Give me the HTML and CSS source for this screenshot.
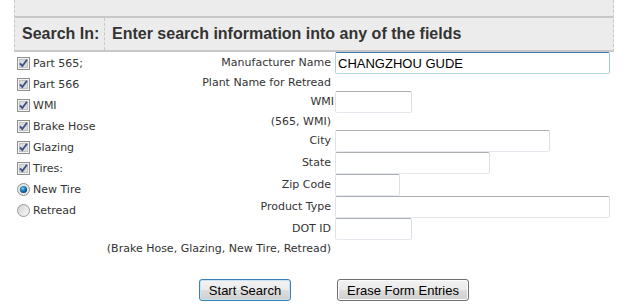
FILE: index.html
```html
<!DOCTYPE html>
<html lang="en">

<head>
    <meta charset="UTF-8">
    <title>Search</title>
    <link rel="stylesheet" href="styles.css">
</head>

<body>
    <div id="box">
        <div class="band"></div>
        <div class="head">
            <div class="head-left">Search In:</div>
            <div class="head-right">Enter search information into any of the fields</div>
        </div>
    </div>

    <form class="main">
        <div class="checks">
            <label class="opt"><svg class="cb" width="13" height="13" viewBox="0 0 13 13"><rect x="0.5" y="0.5" width="12" height="12" fill="#f4f4f4" stroke="#8e8f8f"/><rect x="2.5" y="2.5" width="8" height="8" fill="#dcdcdc" stroke="#c2c2c2"/><path d="M3 6.3 L5.3 9 L10 2.8" fill="none" stroke="#3b5289" stroke-width="1.9"/></svg>Part 565;</label>
            <label class="opt"><svg class="cb" width="13" height="13" viewBox="0 0 13 13"><rect x="0.5" y="0.5" width="12" height="12" fill="#f4f4f4" stroke="#8e8f8f"/><rect x="2.5" y="2.5" width="8" height="8" fill="#dcdcdc" stroke="#c2c2c2"/><path d="M3 6.3 L5.3 9 L10 2.8" fill="none" stroke="#3b5289" stroke-width="1.9"/></svg>Part 566</label>
            <label class="opt"><svg class="cb" width="13" height="13" viewBox="0 0 13 13"><rect x="0.5" y="0.5" width="12" height="12" fill="#f4f4f4" stroke="#8e8f8f"/><rect x="2.5" y="2.5" width="8" height="8" fill="#dcdcdc" stroke="#c2c2c2"/><path d="M3 6.3 L5.3 9 L10 2.8" fill="none" stroke="#3b5289" stroke-width="1.9"/></svg>WMI</label>
            <label class="opt"><svg class="cb" width="13" height="13" viewBox="0 0 13 13"><rect x="0.5" y="0.5" width="12" height="12" fill="#f4f4f4" stroke="#8e8f8f"/><rect x="2.5" y="2.5" width="8" height="8" fill="#dcdcdc" stroke="#c2c2c2"/><path d="M3 6.3 L5.3 9 L10 2.8" fill="none" stroke="#3b5289" stroke-width="1.9"/></svg>Brake Hose</label>
            <label class="opt"><svg class="cb" width="13" height="13" viewBox="0 0 13 13"><rect x="0.5" y="0.5" width="12" height="12" fill="#f4f4f4" stroke="#8e8f8f"/><rect x="2.5" y="2.5" width="8" height="8" fill="#dcdcdc" stroke="#c2c2c2"/><path d="M3 6.3 L5.3 9 L10 2.8" fill="none" stroke="#3b5289" stroke-width="1.9"/></svg>Glazing</label>
            <label class="opt"><svg class="cb" width="13" height="13" viewBox="0 0 13 13"><rect x="0.5" y="0.5" width="12" height="12" fill="#f4f4f4" stroke="#8e8f8f"/><rect x="2.5" y="2.5" width="8" height="8" fill="#dcdcdc" stroke="#c2c2c2"/><path d="M3 6.3 L5.3 9 L10 2.8" fill="none" stroke="#3b5289" stroke-width="1.9"/></svg>Tires:</label>
            <label class="opt"><svg class="cb" width="13" height="13" viewBox="0 0 13 13"><defs><radialGradient id="dot" cx="0.4" cy="0.35" r="0.7"><stop offset="0" stop-color="#7fd0f5"/><stop offset="0.5" stop-color="#1a78b8"/><stop offset="1" stop-color="#0b3f6e"/></radialGradient></defs><circle cx="6.5" cy="6.5" r="6" fill="#e8e8e8" stroke="#8e8f8f"/><circle cx="6.5" cy="6.5" r="3.6" fill="url(#dot)"/></svg>New Tire</label>
            <label class="opt"><svg class="cb" width="13" height="13" viewBox="0 0 13 13"><defs><linearGradient id="rd" x1="0" y1="0" x2="1" y2="1"><stop offset="0" stop-color="#d2d2d2"/><stop offset="1" stop-color="#fafafa"/></linearGradient></defs><circle cx="6.5" cy="6.5" r="6" fill="url(#rd)" stroke="#9a9a9a"/></svg>Retread</label>
        </div>

        <div class="fields">
            <span class="lbl tall">Manufacturer Name</span>
            <input class="txt w-full focus" type="text" value="CHANGZHOU GUDE">

            <span class="lbl">Plant Name for Retread</span>
            <span></span>

            <span class="lbl tall wmi">WMI</span>
            <input class="txt w-short" type="text">

            <span class="lbl">(565, WMI)</span>
            <span></span>

            <span class="lbl tall">City</span>
            <input class="txt w-city" type="text">

            <span class="lbl tall">State</span>
            <input class="txt w-state" type="text">

            <span class="lbl tall">Zip Code</span>
            <input class="txt w-zip" type="text">

            <span class="lbl tall">Product Type</span>
            <input class="txt w-full" type="text">

            <span class="lbl tall">DOT ID</span>
            <input class="txt w-short" type="text">

            <span class="lbl">(Brake Hose, Glazing, New Tire, Retread)</span>
            <span></span>
        </div>
    </form>

    <div class="buttons">
        <button class="btn default" type="button">Start Search</button>
        <button class="btn" type="button">Erase Form Entries</button>
    </div>
</body>

</html>
```

FILE: styles.css
```css
* {
    margin: 0;
    padding: 0;
    box-sizing: border-box;
}

body {
    background-color: #fff;
    font-family: 'DejaVu Sans', sans-serif;
    font-size: 11px;
    color: #333;
}

#box {
    margin-left: 14px;
    width: 600px;
    border-left: 1px dashed #c8c8c8;
    border-right: 1px dashed #c8c8c8;
    background-color: #ececec;
}

.band {
    height: 18px;
    border-bottom: 2px solid #c8c8c8;
}

.head {
    display: flex;
    height: 34px;
    border-bottom: 2px solid #c8c8c8;
    font-family: 'Liberation Sans', Arial, sans-serif;
    font-weight: bold;
    font-size: 16px;
    color: #333;
}

.head-left {
    width: 90px;
    padding-left: 7px;
    border-right: 1px dashed #c8c8c8;
    display: flex;
    align-items: center;
}

.head-right {
    padding-left: 7px;
    display: flex;
    align-items: center;
}

.main {
    display: flex;
}

.checks {
    width: 105px;
    flex-shrink: 0;
    padding-left: 17px;
    padding-top: 1px;
    display: flex;
    flex-direction: column;
}

.opt {
    height: 21px;
    display: flex;
    align-items: center;
    gap: 3px;
    white-space: nowrap;
}

.cb {
    flex-shrink: 0;
}

.fields {
    display: grid;
    grid-template-columns: 226px 279px;
    grid-template-rows: 22px 17px 22px 17px 22px 22px 22px 22px 22px 17px;
    column-gap: 4px;
}

.lbl {
    text-align: right;
    white-space: nowrap;
    line-height: 17px;
}

.lbl.tall {
    line-height: 22px;
}

.wmi {
    margin-right: -3px;
}

.txt {
    height: 22px;
    font-family: 'Liberation Sans', Arial, sans-serif;
    font-size: 13px;
    color: #000;
    padding: 0 2px;
    border: 1px solid;
    border-color: #abadb3 #dbdfe6 #e3e9ef #e2e3ea;
    border-radius: 2px;
    outline: none;
    background: #fff;
}

.txt.focus {
    border-color: #3d7bad #a4c9e3 #b7d9ed #b5cfe7;
}

.w-full {
    width: 275px;
}

.w-short {
    width: 77px;
}

.w-city {
    width: 215px;
}

.w-state {
    width: 155px;
}

.w-zip {
    width: 65px;
}

.buttons {
    display: flex;
    gap: 46px;
    margin-top: 22px;
    padding-left: 199px;
}

.btn {
    height: 22px;
    padding: 0 9px;
    white-space: nowrap;
    font-family: 'Liberation Sans', Arial, sans-serif;
    font-size: 13px;
    color: #000;
    border: 1px solid #707070;
    border-radius: 3px;
    background: linear-gradient(#f2f2f2 0%, #ebebeb 48%, #dddddd 52%, #cfcfcf 100%);
    box-shadow: inset 0 0 0 1px #fcfcfc;
}

.btn.default {
    width: 92px;
    padding: 0;
    border-color: #3c7fb1;
    box-shadow: inset 0 0 0 1px #c7e4f7;
}
```
